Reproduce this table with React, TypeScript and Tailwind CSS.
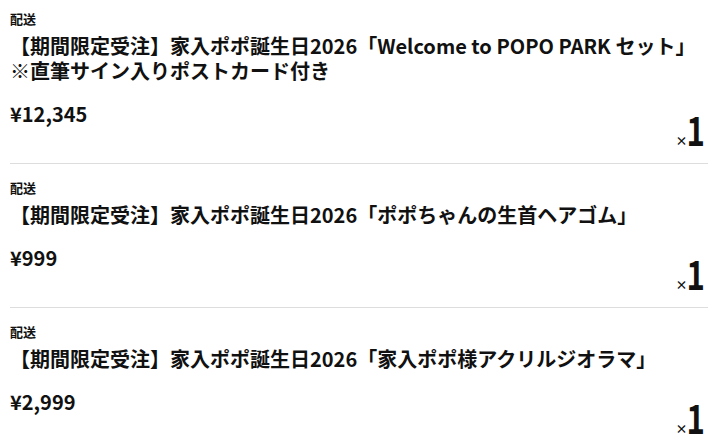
import React from 'react';

interface CartItem {
    id: number;
    title: string[];
    price: string;
    qty: number;
}

const items: CartItem[] = [
    {
        id: 1,
        title: ['【期間限定受注】家入ポポ誕生日2026「Welcome to POPO PARK セット」', '※直筆サイン入りポストカード付き'],
        price: '¥12,345',
        qty: 1,
    },
    {
        id: 2,
        title: ['【期間限定受注】家入ポポ誕生日2026「ポポちゃんの生首ヘアゴム」'],
        price: '¥999',
        qty: 1,
    },
    {
        id: 3,
        title: ['【期間限定受注】家入ポポ誕生日2026「家入ポポ様アクリルジオラマ」'],
        price: '¥2,999',
        qty: 1,
    },
];

const ItemRow: React.FC<{ item: CartItem; first: boolean }> = ({ item, first }) => (
    <div className={`ml-[10px] w-[698px] border-b border-[#dddddd] pb-[15px] ${first ? 'pt-[9px]' : 'pt-[14px]'}`}>
        <p className="text-[13px] leading-[20px] font-bold">配送</p>
        <h2 className="mt-1 text-[20px] leading-[25px] font-bold">
            {item.title.map((line, i) => (
                <span key={i} className="block whitespace-nowrap">{line}</span>
            ))}
        </h2>
        <div className="flex items-start justify-between">
            <span className="mt-[19px] text-[20px] leading-[24px] font-bold">{item.price}</span>
            <div className="mt-[27px] flex items-baseline">
                <span className="mr-[-3px] text-[12px] leading-[12px] font-bold">×</span>
                <span className="inline-block origin-center scale-x-[0.78] text-[40px] leading-[38px] font-bold">{item.qty}</span>
            </div>
        </div>
    </div>
);

export default function App() {
    return (
        <div className="w-[722px] h-[446px] overflow-hidden bg-white text-[#111111] font-['Noto_Sans_CJK_JP',sans-serif]">
            {items.map((item, i) => (
                <ItemRow key={item.id} item={item} first={i === 0} />
            ))}
        </div>
    );
}
